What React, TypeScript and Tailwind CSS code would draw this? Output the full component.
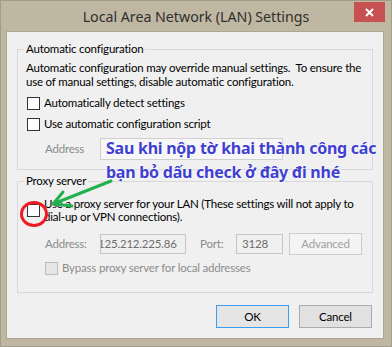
import React from "react";

const ui = { fontFamily: 'Lato, "Noto Sans", sans-serif' };

function Check({ disabled = false }: { disabled?: boolean }) {
  return (
    <span
      className={
        "block w-[13px] h-[13px] shrink-0 border " +
        (disabled ? "border-[#bcbcbc] bg-[#e6e6e6]" : "border-[#333333] bg-white")
      }
    />
  );
}

export default function App() {
  return (
    <div
      className="relative w-[392px] h-[347px] bg-[#bfb7a1] border border-[#a39c88] overflow-hidden text-[11.5px] tracking-[-0.2px] text-black whitespace-nowrap"
      style={ui}
    >
      {/* Title bar */}
      <div className="relative h-[30px] flex items-center justify-center">
        <span
          className="text-[14.2px] tracking-normal text-[#2f2f2f] leading-none mt-[2px]"
          style={{ fontFamily: '"Noto Sans", sans-serif' }}
        >
          Local Area Network (LAN) Settings
        </span>
        <div className="absolute right-[6px] top-[1px] w-[31px] h-[20px] bg-[#c75050] flex items-center justify-center">
          <svg width="9" height="9" viewBox="0 0 9 9">
            <path d="M1 1 L8 8 M8 1 L1 8" stroke="white" strokeWidth="2" />
          </svg>
        </div>
      </div>

      {/* Client area */}
      <div className="ml-[5px] mr-[7px] h-[308px] bg-[#f0f0f0] border border-[#aea690] pl-[10px] pr-[10px] pt-[9px]">
        <fieldset className="border border-[#d9d9d9] pl-[8px] pr-[8px] pb-[9px]">
          <legend className="ml-[-2px] px-[2px] leading-[16px]">Automatic configuration</legend>
          <p className="mt-[4px] leading-[14px]">
            Automatic configuration may override manual settings.&nbsp; To ensure the
            <br />
            use of manual settings, disable automatic configuration.
          </p>
          <div className="mt-[7px] h-[14px] flex items-center gap-[4px] ml-[1px]">
            <Check />
            <span>Automatically detect settings</span>
          </div>
          <div className="mt-[7px] h-[14px] flex items-center gap-[4px] ml-[1px]">
            <Check />
            <span>Use automatic configuration script</span>
          </div>
          <div className="mt-[7px] h-[22px] flex items-center">
            <span className="ml-[19px] w-[55px] text-[#8b8b8b]">Address</span>
            <div className="w-[183px] h-[22px] border border-[#d0d0d0] bg-[#f7f7f7]" />
          </div>
        </fieldset>

        <fieldset className="mt-[3px] border border-[#d9d9d9] pl-[8px] pr-[8px] pb-[17px]">
          <legend className="ml-[-2px] px-[2px] leading-[16px]">Proxy server</legend>
          <div className="mt-[8px] flex items-center gap-[4px] ml-[1px]">
            <Check />
            <span className="leading-[13px]">
              Use a proxy server for your LAN (These settings will not apply to
              <br />
              dial-up or VPN connections).
            </span>
          </div>
          <div className="mt-[10px] h-[22px] flex items-center">
            <span className="ml-[19px] w-[55px] text-[#8b8b8b]">Address:</span>
            <div className="w-[86px] h-[20px] border border-[#c4c4c4] overflow-hidden flex items-center text-[#6d6d6d]">
              <span className="shrink-0 ml-[-3px]">125.212.225.86</span>
            </div>
            <span className="ml-[14px] w-[36px] text-[#8b8b8b]">Port:</span>
            <div className="w-[47px] h-[20px] border border-[#c4c4c4] flex items-center pl-[5px] text-[#6d6d6d]">
              3128
            </div>
            <div className="ml-[6px] w-[73px] h-[22px] border border-[#cccccc] bg-[#f4f4f4] flex items-center justify-center text-[#a0a0a0]">
              Advanced
            </div>
          </div>
          <div className="mt-[6px] h-[14px] flex items-center gap-[4px] ml-[19px]">
            <Check disabled />
            <span className="text-[#8d8d8d]">Bypass proxy server for local addresses</span>
          </div>
        </fieldset>

        <div className="mt-[12px] flex justify-end gap-[10px] pr-[1px]">
          <div className="w-[73px] h-[23px] border border-[#3c9cf0] bg-[#e5e5e5] flex items-center justify-center">
            OK
          </div>
          <div className="w-[73px] h-[23px] border border-[#acacac] bg-[#e1e1e1] flex items-center justify-center">
            Cancel
          </div>
        </div>
      </div>

      {/* Annotation overlay */}
      <div
        className="absolute left-[105px] top-[135px] text-[16px] tracking-[-0.25px] font-bold leading-[24px] text-[#3f3fd2]"
        style={{
          fontFamily: '"Noto Sans", "Open Sans", sans-serif',
          textShadow: "0 0 2px #ffffff, 0 0 2px #ffffff",
        }}
      >
        Sau khi nộp tờ khai thành công các
        <br />
        bạn bỏ dấu check ở đây đi nhé
      </div>
      <svg className="absolute left-0 top-0" width="392" height="347" viewBox="0 0 392 347">
        <ellipse cx="33" cy="213" rx="12.5" ry="11.5" fill="none" stroke="#ed1c24" strokeWidth="3" />
        <path
          d="M110 180 L52 203 M52 203 L62 191 M52 203 L71 205"
          fill="none"
          stroke="#22b14c"
          strokeWidth="3"
          strokeLinecap="round"
        />
      </svg>
    </div>
  );
}
